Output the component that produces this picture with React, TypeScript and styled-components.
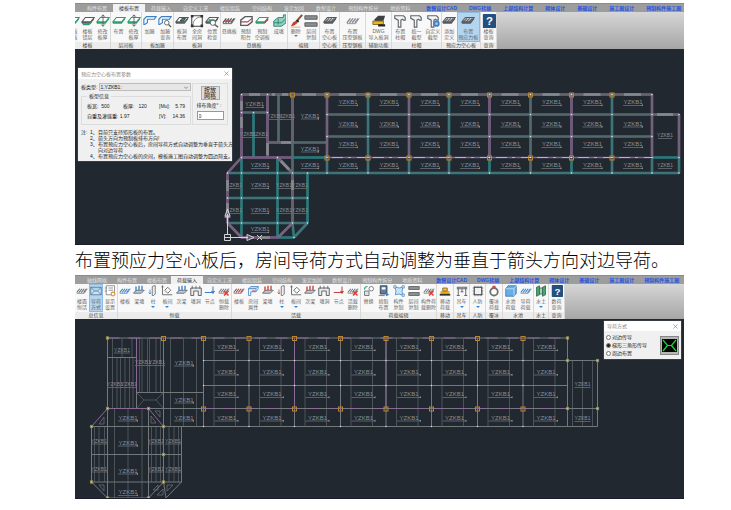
import React from "react";
import styled, { createGlobalStyle, css } from "styled-components";

const CJK = `"Noto Sans CJK SC", sans-serif`;

const GlobalStyle = createGlobalStyle`
  * { box-sizing: border-box; }
  body { margin: 0; background: #fff; font-family: "Liberation Sans", ${CJK}; }
  button, input, select { font: inherit; color: inherit; margin: 0; padding: 0; }
`;

const Page = styled.main`
  padding: 3px 47px 11px 75px;
`;
const Shot = styled.section`
  overflow: hidden;
  font: 5px/6px "Liberation Sans", ${CJK};
`;
const Caption = styled.p`
  margin: 0;
  height: 30px;
  font: 300 18px/33px "Liberation Serif", ${CJK};
  color: #000;
  white-space: nowrap;
`;

/* ---------- ribbon ---------- */
const TabBar = styled.nav<{ $gap: number; $start: number }>`
  display: flex;
  gap: ${(p) => p.$gap}px;
  height: 9px;
  padding-left: ${(p) => p.$start}px;
  background: #9d9d9d;
  border-top: 1px solid #8b8b8b;
  overflow: hidden;
`;
const LinkTabs = styled.div<{ $gap: number }>`
  display: flex;
  gap: ${(p) => p.$gap}px;
  padding-left: 4px;
`;
const Tab = styled.button<{ $active?: boolean; $link?: boolean }>`
  flex: none;
  border: 0;
  background: none;
  color: #e2e2e2;
  line-height: 8px;
  white-space: nowrap;
  ${(p) => p.$link && css`color: #1f55e0; font-weight: 700;`}
  ${(p) => p.$active && css`
    color: #333;
    background: #f1f1f1;
    padding: 0 6px;
    margin: 0 -6px;
  `}
`;
const Ribbon = styled.div`
  display: flex;
  overflow: hidden;
  background: linear-gradient(#d6d6d6, #a6a6a6);
`;
const Group = styled.div<{ $w: number; $clipped?: boolean }>`
  flex: 0 0 ${(p) => p.$w}px;
  margin-left: ${(p) => (p.$clipped ? -10 : 0)}px;
  display: flex;
  flex-direction: column;
  background: #f8f8f8;
  border-right: 1px solid #d8d8d8;
`;
const Buttons = styled.div`
  display: flex;
`;
const ToolButton = styled.button<{ $on?: boolean; $grow?: number; $tall?: boolean }>`
  flex: ${(p) => p.$grow ?? 1} 1 0;
  min-width: 0;
  display: flex;
  flex-direction: column;
  align-items: center;
  gap: ${(p) => (p.$tall ? 0 : 1)}px;
  height: ${(p) => (p.$tall ? 30 : 28)}px;
  padding-top: ${(p) => (p.$tall ? 2 : 1)}px;
  border: 0;
  background: ${(p) => (p.$on ? "#b4d5f0" : "none")};
  box-shadow: ${(p) => (p.$on ? "inset 0 0 0 1px #8dbbe2" : "none")};
  color: #666;
  white-space: pre;
  line-height: 6px;
  svg { flex: none; }
`;
const Arrow = styled.span`
  margin-top: 1px;
  border: 2px solid transparent;
  border-top-color: #2f86d8;
`;
const GroupName = styled.div`
  height: 7px;
  background: #ececec;
  color: #444;
  text-align: center;
  line-height: 7px;
  white-space: nowrap;
`;

const Hatch = ({ c }: { c: string }) => (
  <g stroke={c} strokeWidth="1.5" fill="none">
    <path d="M1 10 5 5M4 10 8 5M7 10 11 5M10 10 14 5" />
    <path d="M1 11H11L15 5" strokeWidth="1" />
  </g>
);
const Slab = ({ c, fill = "#fff" }: { c: string; fill?: string }) => (
  <g>
    <path d="M1 9 5 4H15L11 9Z" fill={fill} stroke={c} strokeWidth="1.2" />
    <path d="M1 9V11H11L15 6V4L11 9Z" fill={c} />
  </g>
);

const BLUE = "#3d80c4";
const RED = "#c2423a";
const GREEN = "#2f9e6e";
const GREY = "#555b60";

const shapes: Record<string, React.ReactNode> = {
  slabDrop: <><Slab c={GREY} /><path d="M2 12H9L12 9" stroke={GREEN} strokeWidth="1.5" fill="none" /></>,
  slabEdit: <><Slab c={GREEN} /><path d="M8 1V14M6 3 8 1 10 3M6 12 8 14 10 12" stroke={GREY} fill="none" /></>,
  slab: <Slab c={GREEN} />,
  haunch: <path d="M1 6 4 3H15L13 6H5V10L2 12H1Z" fill="#fff" stroke={BLUE} strokeWidth="1.3" />,
  haunchFind: <><path d="M1 6 4 3H15L13 6H5V10L2 12H1Z" fill="#fff" stroke={BLUE} strokeWidth="1.3" /><circle cx="10" cy="10" r="2.6" fill="#fff" stroke={GREY} /><path d="M12 12 15 15" stroke={GREY} strokeWidth="1.5" /></>,
  hole: <><Slab c={GREY} /><path d="M6 8 8 5H12L10 8Z" fill={GREEN} stroke="#333" /></>,
  frame: <><path d="M2 2H14V14H2Z" fill="#fff" stroke="#444" strokeWidth="1.2" /><path d="M3 13Q4 4 13 3" fill="none" stroke="#777" /><path d="M1 1H4V4H1ZM12 1H15V4H12ZM1 12H4V15H1ZM12 12H15V15H12Z" fill="#333" /></>,
  find: <><Slab c={GREY} /><path d="M4 6H11V9H4Z" fill={GREEN} /><circle cx="9" cy="10" r="3" fill="#fff" stroke={GREY} /><path d="M11 12 15 15" stroke={GREY} strokeWidth="1.6" /></>,
  canti: <><Hatch c={GREY} /><path d="M3 8H10" stroke={RED} strokeWidth="1.5" /></>,
  balcony: <><path d="M2 7 7 3H15V9L10 13H2Z" fill="#fff" stroke={GREY} strokeWidth="1.5" /><path d="M2 9H10L15 5" fill="none" stroke={RED} strokeWidth="1.4" /></>,
  acSlab: <><Slab c={GREEN} /><path d="M11 10 15 6" stroke={RED} strokeWidth="1.6" /></>,
  wallUp: <><path d="M2 8 7 4H13V1H16V10L11 14H2Z" fill="#8fd0bf" stroke="#28806c" /><path d="M7 5V12M2 10H11L15 6" stroke="#28806c" fill="none" /></>,
  brush: <><path d="M15 1 8 9" stroke="#8a542d" strokeWidth="2.4" /><path d="M8 8 10 10 6 13 2 14 5 9Z" fill={RED} /><path d="M9 7 11 9" stroke="#222" strokeWidth="2" /><path d="M2 15H13" stroke="#e0a060" /></>,
  layers: <path d="M1 2H15V6H1ZM1 10H15V14H1Z" fill="#8c8f92" stroke="#555" />,
  hollow: <><Slab c={GREY} fill="#d6dadd" /><path d="M3 9 7 5M6 9 10 5M9 9 13 5" stroke={GREY} strokeWidth="1.3" /></>,
  steel: <Hatch c="#848b91" />,
  dwg: <><path d="M3 6 7 2H15L13 8H3Z" fill="#3c4146" /><path d="M1 8H13V12H1Z" fill="#e8b525" stroke="#846514" /><path d="M7 13H15" stroke="#222" strokeWidth="2.5" /></>,
  cap: <path d="M2 2H12L14 4 14 7 12 7 11 6 9 7V15H6V7L2 5Z" fill="#f4f4f4" stroke="#60676c" strokeWidth="1.3" />,
  capGear: <><path d="M2 2H12L14 4 14 7 12 7 11 6 9 7V15H6V7L2 5Z" fill="#f4f4f4" stroke="#60676c" strokeWidth="1.3" /><circle cx="12" cy="11" r="2.6" fill="#9ec8ee" stroke={BLUE} strokeWidth="2" /></>,
  help: <><rect x="1" y="0" width="15" height="16" rx="1" fill="#24507f" /><text x="8.5" y="13" fontSize="13" fontWeight="700" textAnchor="middle" fill="#fff" fontFamily="Liberation Sans">?</text></>,
  hatchGrey: <Hatch c="#666d73" />,
  envelope: <path d="M1 3H15V13H1ZM1 3 6 8H10L15 3M1 13 6 8M10 8 15 13" fill="#cfe3f5" stroke="#4a6e92" />,
  gearList: <><path d="M3 1H14V13H3Z" fill="#fff" stroke="#777" /><path d="M6 4H12M6 7H12" stroke="#777" /><circle cx="12" cy="12" r="2.5" fill="#fff" stroke="#d39b33" strokeWidth="1.5" /><path d="M1 4H4M1 8H4" stroke="#777" /></>,
  hatchBlue: <Hatch c={BLUE} />,
  hatchRed: <Hatch c="#9c4a49" />,
  room: <><path d="M2 5 5 2H15L12 5Z" fill="#bcdcf5" stroke={BLUE} /><path d="M2 5H12V9H5V14H2Z" fill="#e9f3fb" stroke={BLUE} /><path d="M12 9 15 5V2" fill="none" stroke={BLUE} /><path d="M7 8H11" stroke={RED} strokeWidth="1.4" /></>,
  beamBlue: <><path d="M1 10 5 7H15L11 11H1Z" fill="#bfc7ce" stroke={GREY} /><path d="M4 2V8M8 1V7M12 1V7" stroke={BLUE} strokeWidth="1.8" /></>,
  beamRed: <><path d="M1 10 5 7H15L11 11H1Z" fill="#bfc7ce" stroke={GREY} /><path d="M4 2V8M8 1V7M12 1V7" stroke={RED} strokeWidth="1.8" /></>,
  colBlue: <><path d="M7 2 9 1H11V12L9 14H7Z" fill="#eee" stroke={GREY} /><path d="M4 6V12M2 10 4 12 5 10" fill="none" stroke={BLUE} /></>,
  colRed: <><path d="M7 2 9 1H11V12L9 14H7Z" fill="#eee" stroke={GREY} /><path d="M4 6V12M2 10 4 12 5 10" fill="none" stroke={RED} /></>,
  diamond: <path d="M2 1V13H15M1 3 2 1 3 3M9 3 13 7 9 11 5 7Z" fill="none" stroke="#666" strokeWidth="1.2" />,
  arch: <><path d="M1 4H15V14H11V8H5V14H1Z" fill="#e8eaec" stroke={GREY} strokeWidth="1.2" /><path d="M3 1V5M8 1V5M13 1V5" stroke={GREY} /></>,
  nodeBlue: <path d="M1 10H11M12 2V11M10 8 12 11 14 8" fill="none" stroke={BLUE} strokeWidth="1.4" />,
  nodeRed: <path d="M1 10H11M12 2V11M10 8 12 11 14 8" fill="none" stroke={RED} strokeWidth="1.4" />,
  erase: <><Hatch c="#747b82" /><path d="M8 8 14 14M14 8 8 14" stroke="#e23a32" strokeWidth="2" /></>,
  swap: <><path d="M2 8H8V14H2Z" fill="#d7e6dc" stroke={GREY} /><circle cx="11" cy="5" r="3" fill="#fff" stroke={GREY} /><path d="M2 6Q2 2 6 2" stroke={GREEN} strokeWidth="1.5" fill="none" /></>,
  pick: <><path d="M3 1H12V12H3Z" fill="#557ea8" stroke="#333" /><path d="M5 3H10V6H5Z" fill="#fff" /><path d="M9 9 15 13 11 15Z" fill={BLUE} /><path d="M1 14H9" stroke="#c17d38" strokeWidth="1.5" /></>,
  copy: <><path d="M2 2 8 4 13 3 12 9 14 14 8 12 3 13 4 8Z" fill="#c9e2f4" stroke={BLUE} /><path d="M1 1H4V4H1ZM12 1H15V4H12ZM12 12H15V15H12Z" fill="#fff" stroke={BLUE} /></>,
  truck: <><path d="M2 8H14V12H2Z" fill="#eba91b" /><path d="M5 4H11V8H5Z" fill="#f3c34a" stroke="#765514" /><path d="M1 13H15" stroke="#333" strokeWidth="2.4" /></>,
  crane: <path d="M1 3H15M3 3V14M13 3V14M1 5H15M8 5V9M6 9H10M1 14H5M11 14H15" fill="none" stroke="#60666b" strokeWidth="1.3" />,
  chip: <><path d="M4 1V15M8 1V15M12 1V15M1 4H15M1 8H15M1 12H15" stroke="#777" /><rect x="3" y="3" width="10" height="10" fill="#f1f1f1" stroke="#454b50" strokeWidth="1.5" /></>,
  ring: <><circle cx="8" cy="9" r="5" fill="#fff" stroke="#687078" strokeWidth="2.4" /><path d="M6 1H10V5H6Z" fill="#c45248" /></>,
  pool: <><path d="M1 5 4 1H15V11L12 15H1Z" fill="#65aee8" stroke="#326fa2" /><path d="M1 5H12V15M12 5 15 1" fill="none" stroke="#d2eafc" /></>,
  soil: <><path d="M2 3 6 1V13L2 15ZM10 3 14 1V13L10 15Z" fill="#4aa372" stroke="#276144" /><path d="M6 4H10V12H6Z" fill="#a8d5ba" stroke="#276144" /></>,
};

type Tool = { icon: string; text: string; on?: boolean; menu?: boolean; grow?: number };
type ToolGroup = { name: string; w: number; clipped?: boolean; tools: Tool[] };
const t = (icon: string, text: string, more: Partial<Tool> = {}): Tool => ({ icon, text, ...more });

const slabGroups: ToolGroup[] = [
  { name: "楼板", w: 46, clipped: true, tools: [t("slab", "楼板\n生板"), t("slabDrop", "楼板\n错层"), t("slabEdit", "修改\n板厚")] },
  { name: "层间板", w: 31, tools: [t("slab", "布置"), t("slabEdit", "修改\n板厚")] },
  { name: "板加腋", w: 32, tools: [t("haunch", "加腋"), t("haunchFind", "加腋\n查询")] },
  { name: "板洞", w: 47, tools: [t("hole", "板洞\n布置"), t("frame", "全房\n间洞"), t("find", "位置\n检查")] },
  { name: "悬挑板", w: 67, tools: [t("canti", "悬挑板"), t("balcony", "预制\n阳台"), t("acSlab", "预制\n空调板"), t("wallUp", "成墙")] },
  { name: "编辑", w: 32, tools: [t("brush", "删除", { menu: true }), t("layers", "层间\n复制")] },
  { name: "空心板", w: 20, tools: [t("hollow", "布置\n空心板")] },
  { name: "压型钢板", w: 26, tools: [t("steel", "布置\n压型钢板")] },
  { name: "辅助功能", w: 26, tools: [t("dwg", "DWG\n导入板洞")] },
  { name: "柱帽", w: 50, tools: [t("cap", "布置\n柱帽"), t("cap", "统一\n截型"), t("capGear", "自定义\n截型")] },
  { name: "预应力空心板", w: 39, tools: [t("hollow", "添加\n定义", { grow: 5 }), t("hollow", "布置\n预应力板", { on: true, grow: 8 })] },
  { name: "查询", w: 16, tools: [t("help", "楼板\n查询")] },
];

const loadGroups: ToolGroup[] = [
  { name: "总信息", w: 43, tools: [t("hatchGrey", "楼面\n恒活"), t("envelope", "导荷\n方式", { on: true }), t("gearList", "显示\n设置")] },
  { name: "恒载", w: 114, tools: [t("hatchBlue", "楼板"), t("beamBlue", "梁墙"), t("colBlue", "柱", { menu: true }), t("diamond", "板间", { menu: true }), t("beamBlue", "次梁"), t("arch", "墙洞"), t("nodeBlue", "节点"), t("erase", "恒载\n删除")] },
  { name: "活载", w: 129, tools: [t("hatchRed", "楼板"), t("room", "房间\n属性"), t("beamRed", "梁墙"), t("colRed", "柱", { menu: true }), t("diamond", "板间", { menu: true }), t("beamRed", "次梁"), t("arch", "墙洞"), t("nodeRed", "节点"), t("erase", "活载\n删除")] },
  { name: "荷载编辑", w: 76, tools: [t("swap", "替换"), t("pick", "拾取\n布置"), t("copy", "构件\n复制"), t("layers", "层间\n复制"), t("erase", "构件荷\n载删除")] },
  { name: "移动", w: 17, tools: [t("truck", "移动\n荷载", { menu: true })] },
  { name: "吊车", w: 16, tools: [t("crane", "吊车", { menu: true })] },
  { name: "人防", w: 16, tools: [t("chip", "人防", { menu: true })] },
  { name: "覆冰", w: 17, tools: [t("ring", "覆冰\n荷载")] },
  { name: "水池", w: 31, tools: [t("pool", "水池\n荷载"), t("hatchBlue", "导荷\n荷载")] },
  { name: "水土", w: 15, tools: [t("soil", "水土", { menu: true })] },
  { name: "查询", w: 16, tools: [t("help", "数荷\n查询")] },
];

const plainTabs = ["构件布置", "楼板布置", "荷载输入", "自定义工况", "楼层组装", "空间结构", "鉴定加固", "数智设计", "预制构件拆分", "地质资料"];
const linkTabs = ["数智设计CAD", "DWG转换", "上部结构计算", "砌体设计", "基础设计", "施工图设计", "预制构件施工图"];

function RibbonBar({ tabs, active, gap, start, groups, tall }: {
  tabs: string[]; active: string; gap: number; start: number; groups: ToolGroup[]; tall?: boolean;
}) {
  const size = tall ? 14 : 12;
  return (
    <header>
      <TabBar $gap={gap} $start={start}>
        {tabs.map((n) => <Tab key={n} $active={n === active}>{n}</Tab>)}
        <LinkTabs $gap={gap}>
          {linkTabs.map((n) => <Tab key={n} $link>{n}</Tab>)}
        </LinkTabs>
      </TabBar>
      <Ribbon>
        {groups.map((g) => (
          <Group key={g.name} $w={g.w} $clipped={g.clipped}>
            <Buttons>
              {g.tools.map((b, i) => (
                <ToolButton key={i} $on={b.on} $grow={b.grow} $tall={tall}>
                  <svg width={size} height={size} viewBox="0 0 16 16" aria-hidden="true">{shapes[b.icon]}</svg>
                  <span>{b.text}</span>
                  {b.menu && <Arrow />}
                </ToolButton>
              ))}
            </Buttons>
            <GroupName>{g.name}</GroupName>
          </Group>
        ))}
      </Ribbon>
    </header>
  );
}

/* ---------- drawings ---------- */
const Canvas = styled.div`
  position: relative;
  background: #212830;
  overflow: hidden;
  border-bottom: 1px solid #1c1c2e;
`;
const Drawing = styled.svg`
  display: block;
  width: 100%;
  height: auto;
  text { font: 6px "Liberation Sans", sans-serif; fill: #8b8e92; text-anchor: middle; }
  text.small { font-size: 5px; }
`;

type Seg = [number, number, number, number];
const toPath = (s: Seg[]) => s.map(([a, b, c, d]) => `M${a} ${b}L${c} ${d}`).join("");

const Mark = ({ x, y, half = 10 }: { x: number; y: number; half?: number }) => (
  <g>
    <text x={x} y={y - 1} className={half > 8 ? undefined : "small"}>YZKB1</text>
    <path d={`M${x - half} ${y + 0.5}H${x + half}`} stroke="#6b6f74" strokeWidth="0.8" />
    {half > 8 && <path d={`M${x + half} ${y - 0.7}v2l-2 -1z`} fill="#8d9094" />}
  </g>
);

const axes = [327, 368, 409, 449, 489.5, 530.5, 571.5, 612];

function WallPlan() {
  const teal: Seg[] = [
    [327, 114.5, 652, 114.5], [327, 136.5, 652, 136.5], [227.5, 173, 679, 173],
    [292, 142.5, 327, 142.5], [292, 157.5, 327, 157.5], [652, 157.5, 679, 157.5],
    [241.5, 112.5, 267.5, 112.5], [253.5, 112.5, 253.5, 157], [278.5, 94.5, 278.5, 142.5],
    [292.5, 142.5, 292.5, 173], [241.5, 157, 241.5, 237.5], [277.5, 157, 277.5, 237.5],
    [227.5, 198, 308, 198], [227.5, 223, 308, 223], [307.5, 173, 307.5, 223],
    [307.5, 223, 294, 237.5], [292.5, 223, 294, 237.5], [278, 237.5, 294, 237.5],
    [679, 157, 679, 173], [652, 157, 652, 173],
    ...axes.map((x): Seg => [x, 157, x, 173]),
    ...axes.filter((_, i) => i % 2).map((x): Seg => [x, 94, x, 157]),
  ];
  const purple: Seg[] = [
    [241.5, 94.5, 652, 94.5], [241.5, 94.5, 241.5, 157.5], [267.5, 94.5, 267.5, 157.5],
    [292.5, 94.5, 292.5, 142.5], [267.5, 142.5, 292, 142.5], [241.5, 157.5, 292, 157.5],
    [241.5, 157.5, 227.5, 173], [277.5, 157.5, 292.5, 173], [227.5, 173, 227.5, 223],
    [292.5, 173, 292.5, 223], [227.5, 223, 241.5, 237.5], [241.5, 237.5, 278, 237.5],
    [278, 237.5, 292.5, 223], [652, 94.5, 652, 157], [652, 114.5, 679, 114.5], [679, 114.5, 679, 157],
    ...axes.filter((_, i) => i % 2 === 0).map((x): Seg => [x, 94, x, 157]),
  ];
  const glass: Seg[] = [
    [249, 94.5, 260, 94.5], [272, 94.5, 275, 94.5], [282, 94.5, 288, 94.5], [302, 94.5, 316, 94.5],
    [241.5, 101, 241.5, 110], [241.5, 117, 241.5, 128], [267.5, 143, 267.5, 155], [281, 142.5, 291, 142.5],
    [227.5, 180, 227.5, 191], [227.5, 203, 227.5, 214], [281, 161, 289, 169.5], [260, 237.5, 270, 237.5],
    [292.5, 180, 292.5, 190], [657, 114.5, 673, 114.5],
    ...axes.map((x): Seg => [x + 12, 94.5, x + 29, 94.5]),
  ];
  const nodes = [...axes, 652].flatMap((x) => [94.5, 114.5, 136.5, 157.5, 173].map((y) => [x, y]))
    .concat([[241.5, 94.5], [241.5, 112.5], [267.5, 94.5], [267.5, 112.5], [253.5, 112.5], [241.5, 157.5], [277.5, 157.5], [292.5, 173], [227.5, 173], [227.5, 198], [227.5, 223], [241.5, 173], [241.5, 198], [241.5, 223], [277.5, 173], [277.5, 198], [277.5, 223], [292.5, 198], [292.5, 223], [307.5, 198], [307.5, 223], [307.5, 173], [241.5, 237.5], [294, 237.5], [679, 114.5], [679, 157.5], [679, 173]]);
  return (
    <Drawing viewBox="75 49 609 195">
      <path d={toPath(teal)} stroke="#2d7f82" strokeWidth="2.6" />
      <path d={toPath(teal)} stroke="#52686d" strokeWidth="1" />
      <path d={toPath(purple)} stroke="#80668a" strokeWidth="2.6" />
      <path d={toPath(purple)} stroke="#65616b" strokeWidth="1" />
      <path d={toPath(glass)} stroke="#868a8e" strokeWidth="2.6" />
      <path d="M327 157.5H652" stroke="#212830" strokeWidth="3" />
      <path d="M327 157.5H652" stroke="#80668a" strokeWidth="1.4" />
      <path d="M332 157.5H652" stroke="#b4b7ba" strokeWidth="1.2" strokeDasharray="11 5 3 6 9 7" />
      {[292.5, ...axes].map((x) => <rect key={x} x={x - 2} y={93} width="4" height="4" fill="none" stroke="#b9862f" />)}
      {axes.map((x) => <rect key={x} x={x - 2} y={156} width="4" height="4" fill="none" stroke="#b9862f" />)}
      {nodes.map(([x, y], i) => <rect key={i} x={x - 0.7} y={y - 0.7} width="1.4" height="1.4" fill="#dfe8ea" />)}
      {axes.map((x) => [105, 126.5, 147, 168].map((y) => <Mark key={`${x}-${y}`} x={x + 21} y={y} />))}
      {[[254.5, 107], [310, 118.5], [310, 151.5], [310, 168], [260, 168], [260, 188], [260, 213], [260, 232]].map(([x, y]) => <Mark key={`${x}-${y}`} x={x} y={y} half={9} />)}
      {[[248, 137], [260, 137], [275, 119], [287, 119], [234, 188], [234, 213], [284, 188], [300, 188], [284, 213], [300, 213], [665, 138], [665, 168]].map(([x, y]) => <Mark key={`${x}-${y}`} x={x} y={y} half={7} />)}
      <path d="M224.5 234.5h6v6h-6zM227.5 234.5V214M224.5 237.5H248M224.5 217h6M225 216l2.5 -7 2.5 7zM247 234.5l7 3 -7 3zM257 235l5 5m0 -5l-5 5" fill="none" stroke="#d2d5d8" strokeWidth="1" />
    </Drawing>
  );
}

const bays = [203.5, 249, 294.5, 340.5, 386, 431.5, 477.5, 523];

function LoadPlan() {
  const main: Seg[] = [
    [107.5, 338, 567.5, 338], [203.5, 360.5, 567.5, 360.5], [203.5, 385.5, 567.5, 385.5],
    [107.5, 408.5, 597.5, 408.5], [91.5, 426.5, 597.5, 426.5], [567.5, 360.5, 597.5, 360.5],
    ...bays.map((x): Seg => [x, 338, x, 426.5]), [567.5, 338, 567.5, 426.5], [597.5, 360.5, 597.5, 426.5],
    [107.5, 338, 107.5, 498], [107.5, 357.5, 136.5, 357.5], [136.5, 392.5, 203.5, 392.5], [136.5, 338, 136.5, 408.5],
    [163.5, 338, 163.5, 482], [148.5, 408.5, 148.5, 498], [91.5, 454.5, 181.5, 454.5], [91.5, 482, 181.5, 482],
    [181.5, 426.5, 181.5, 482], [181.5, 482, 166, 498], [166, 498, 163.5, 482],
  ];
  const faint: Seg[] = [
    ...bays.flatMap((x): Seg[] => [[x + 10.5, 338, x + 10.5, 426.5], [x + 32, 338, x + 32, 426.5]]),
    [572.5, 360.5, 572.5, 426.5], [582.5, 360.5, 582.5, 426.5], [592.5, 360.5, 592.5, 426.5],
    [112.5, 338, 112.5, 357.5], [122, 338, 122, 357.5], [132, 338, 132, 357.5],
    [112.5, 357.5, 112.5, 408.5], [117, 357.5, 117, 408.5], [120.5, 357.5, 120.5, 408.5], [125, 357.5, 125, 408.5], [129.5, 357.5, 129.5, 408.5], [133, 357.5, 133, 408.5],
    [139.5, 338, 139.5, 392.5], [142, 338, 142, 392.5], [147.5, 338, 147.5, 392.5], [149.5, 338, 149.5, 392.5], [156, 338, 156, 392.5], [160.5, 338, 160.5, 392.5],
    [170.5, 338, 170.5, 426.5], [183.5, 338, 183.5, 426.5], [196.5, 338, 196.5, 426.5],
    [114.5, 408.5, 114.5, 498], [128, 408.5, 128, 498], [142, 408.5, 142, 498],
    [94.5, 426.5, 94.5, 482], [99, 426.5, 99, 482], [104.5, 426.5, 104.5, 482],
    [151.5, 426.5, 151.5, 482], [156, 426.5, 156, 482], [160.5, 426.5, 160.5, 482],
    [169, 426.5, 169, 482], [174, 426.5, 174, 482], [178.5, 426.5, 178.5, 482],
    [136.5, 392.5, 144, 400], [136.5, 408.5, 144, 400], [144, 400, 156, 400], [156, 400, 163.5, 392.5], [156, 400, 163.5, 408.5],
  ];
  const purple: Seg[] = [
    [107.5, 338, 107.5, 408.5], [136.5, 338, 136.5, 392.5], [163.5, 338, 163.5, 392.5],
    [107.5, 408.5, 91.5, 426.5], [91.5, 426.5, 91.5, 482], [91.5, 482, 107.5, 498], [148.5, 408.5, 163.5, 426.5],
    [163.5, 426.5, 163.5, 482], [163.5, 482, 148.5, 498], [567.5, 338, 567.5, 408.5], [597.5, 360.5, 597.5, 408.5],
    [107.5, 408.5, 148.5, 408.5], [107.5, 498, 148.5, 498],
    ...bays.filter((_, i) => i % 2 === 0).map((x): Seg => [x, 338, x, 408.5]),
  ];
  const joints = [[107.5, 338], [107.5, 408.5], [148.5, 408.5], [91.5, 426.5], [163.5, 426.5], [163.5, 454.5], [91.5, 482], [163.5, 482], [107.5, 498], [148.5, 498], [567.5, 338], [567.5, 360.5], [597.5, 360.5], [567.5, 408.5], [597.5, 408.5]];
  return (
    <Drawing viewBox="75 319 609 179">
      <path d={toPath(faint)} stroke="#4c5358" strokeWidth="1" />
      <path d={toPath(main)} stroke="#73787b" strokeWidth="1" />
      <path d={toPath(purple)} stroke="#8b6a97" strokeWidth="1" />
      <path d="M107.5 338H567M203 408.5H567" stroke="#8b6a97" strokeWidth="1" strokeDasharray="12 9" />
      <path d="M104 417v7h-5zM160 411v6l-5 -6zM151 416v7h5zM99 485h5v6zM158 485v5l-5 0zM163 489v6h-6zM167 485h6l-6 6z" fill="none" stroke="#686e72" strokeWidth="0.8" />
      {bays.map((x) => [360.5, 385.5, 426.5].map((y) => <rect key={`${x}-${y}`} x={x - 0.6} y={y - 0.6} width="1.2" height="1.2" fill="#e6e6e6" />))}
      {[163.5, ...bays].map((x) => <rect key={x} x={x - 2} y={336.5} width="4" height="4" fill="none" stroke="#b9862f" />)}
      {bays.map((x) => <rect key={x} x={x - 2} y={407} width="4" height="4" fill="none" stroke="#b9862f" />)}
      {joints.map(([x, y]) => <rect key={`${x}-${y}`} x={x - 1.2} y={y - 1.2} width="2.4" height="2.4" fill="#c9c9a8" stroke="#8e8b48" strokeWidth="0.8" />)}
      {bays.map((x) => [350, 374.5, 397, 420.5].map((y) => <Mark key={`${x}-${y}`} x={x + 23} y={y} half={12} />))}
      {[[184, 365.5], [184, 402.5], [184, 420.5], [128, 420.5], [128, 445.5], [128, 473.5], [128, 495]].map(([x, y]) => <Mark key={`${x}-${y}`} x={x} y={y} half={10} />)}
      {[[122, 352.5], [115, 387], [129, 387], [143, 365], [157, 365], [99, 443.5], [99, 471.5], [156, 443.5], [173, 443.5], [156, 471.5], [173, 471.5], [582.5, 387], [582.5, 421]].map(([x, y]) => <Mark key={`${x}-${y}`} x={x} y={y} half={8} />)}
    </Drawing>
  );
}

/* ---------- dialogs ---------- */
const Dialog = styled.form<{ $side: "left" | "right" }>`
  position: absolute;
  ${(p) => (p.$side === "left" ? "left: 3px; top: 19px; width: 154px;" : "right: 3px; top: 2px; width: 77px;")}
  background: #f0f0f0;
  color: #222;
  box-shadow: 0 0 1px #aaa;
`;
const TitleBar = styled.div<{ $h: number }>`
  display: flex;
  justify-content: space-between;
  align-items: center;
  height: ${(p) => p.$h}px;
  padding: 0 3px;
  background: #fff;
  color: #888;
`;
const Close = styled.button`
  border: 0;
  background: none;
  line-height: 0;
`;
const Params = styled.div`
  display: flex;
  gap: 1px;
  padding: 4px 4px 0 3px;
`;
const Left = styled.div`
  flex: 1;
  min-width: 0;
`;
const TypeRow = styled.label`
  display: flex;
  align-items: center;
  gap: 2px;
  white-space: nowrap;
`;
const TypeBox = styled.span`
  flex: 1;
  display: flex;
  align-items: center;
  height: 8px;
  padding-right: 2px;
  border: 1px solid #bcbcbc;
  background: #e6e6e6;
`;
const TypeSelect = styled.select`
  flex: 1;
  appearance: none;
  border: 0;
  background: none;
  height: 6px;
  line-height: 6px;
`;
const Info = styled.fieldset`
  margin: 2px 0 0;
  padding: 4px 5px 1px;
  border: 1px solid #dcdcdc;
  legend { padding: 0 2px; }
`;
const Values = styled.div`
  display: grid;
  grid-template-columns: 36px 36px 1fr auto;
  height: 10px;
  line-height: 6px;
  white-space: pre;
  span:last-child { text-align: right; }
`;
const Side = styled.div`
  flex: 0 0 36px;
  display: flex;
  flex-direction: column;
  align-items: center;
  padding-top: 2px;
  border: 1px solid #dedede;
`;
const GridButton = styled.button`
  width: 19px;
  height: 14px;
  border: 1px solid #aaa;
  background: #ddd;
  font-size: 6px;
  line-height: 6px;
`;
const Angle = styled.label`
  display: flex;
  flex-direction: column;
  gap: 3px;
  padding-top: 2px;
  white-space: nowrap;
  input { width: 27px; height: 9px; border: 1px solid #999; background: #fff; padding-left: 1px; }
`;
const Notes = styled.div`
  padding: 4px 0 2px 3px;
  line-height: 6px;
  white-space: nowrap;
  display: grid;
  grid-template-columns: 9px 8px 1fr;
`;
const Modes = styled.div`
  display: flex;
  justify-content: space-between;
  align-items: center;
  padding: 3px 2px;
`;
const ModeList = styled.div`
  display: grid;
  gap: 2px;
`;
const Mode = styled.label`
  display: flex;
  align-items: center;
  gap: 1px;
  white-space: nowrap;
  input {
    appearance: none;
    width: 5px;
    height: 5px;
    border: 1px solid #777;
    border-radius: 50%;
    background: #fff;
  }
  input:checked { background: #222; }
`;
const Preview = styled.button`
  width: 19px;
  height: 19px;
  border: 1px solid #888;
  background: #b7b7b7;
  line-height: 0;
`;

const CloseIcon = () => (
  <svg width="5" height="5" viewBox="0 0 5 5"><path d="M0.5 0.5 4.5 4.5M4.5 0.5 0.5 4.5" stroke="#888" strokeWidth="0.7" /></svg>
);

const notes: [string, string, string][] = [
  ["注:", "1、", "目前只支持矩形板的布置。"],
  ["", "2、", "箭头方向为预制板排布方向!"],
  ["", "3、", "布置预应力空心板后，房间导荷方式自动调整为垂直于箭头方"],
  ["", "", "向对边导荷"],
  ["", "4、", "布置预应力空心板的房间，模板施工图自动调整为四边简支。"],
];

function SlabDialog() {
  return (
    <Dialog $side="left">
      <TitleBar $h={11}>预应力空心板布置参数<Close type="button" aria-label="关闭"><CloseIcon /></Close></TitleBar>
      <Params>
        <Left>
          <TypeRow>板类型:
            <TypeBox>
              <TypeSelect><option>1.YZKB1:</option></TypeSelect>
              <svg width="4" height="3" viewBox="0 0 4 3"><path d="M0 0.5 2 2.5 4 0.5" fill="none" stroke="#666" strokeWidth="0.7" /></svg>
            </TypeBox>
          </TypeRow>
          <Info>
            <legend>板型信息</legend>
            <Values><span>板宽:  500</span><span>板厚:   120</span><span>[Mu]:</span><span>5.79</span></Values>
            <Values><span>自重及灌缝重: 1.97</span><span /><span>[V]:</span><span>14.36</span></Values>
          </Info>
        </Left>
        <Side>
          <GridButton type="button">按放网格</GridButton>
          <Angle>排布角度° :<input defaultValue="0" /></Angle>
        </Side>
      </Params>
      <Notes>
        {notes.flatMap((row, i) => row.map((cell, j) => <span key={`${i}-${j}`}>{cell}</span>))}
      </Notes>
    </Dialog>
  );
}

function ModeDialog() {
  return (
    <Dialog $side="right">
      <TitleBar $h={10}>导荷方式<Close type="button" aria-label="关闭"><CloseIcon /></Close></TitleBar>
      <Modes>
        <ModeList>
          {["对边传导", "梯形三角形传导", "周边布置"].map((m, i) => (
            <Mode key={m}><input type="radio" name="mode" defaultChecked={i === 1} />{m}</Mode>
          ))}
        </ModeList>
        <Preview type="button" aria-label="梯形三角形传导">
          <svg width="15" height="13" viewBox="0 0 15 13">
            <rect width="15" height="13" fill="#050505" />
            <path d="M1 1 5.5 6.5H9.5L14 1M1 12 5.5 6.5M9.5 6.5 14 12" fill="none" stroke="#18d83a" strokeWidth="1.2" />
          </svg>
        </Preview>
      </Modes>
    </Dialog>
  );
}

export default function App() {
  return (
    <Page>
      <GlobalStyle />
      <Shot>
        <RibbonBar tabs={plainTabs} active="楼板布置" gap={12} start={12} groups={slabGroups} tall />
        <Canvas><WallPlan /><SlabDialog /></Canvas>
      </Shot>
      <Caption>布置预应力空心板后，房间导荷方式自动调整为垂直于箭头方向对边导荷。</Caption>
      <Shot>
        <RibbonBar tabs={["轴线网格", ...plainTabs]} active="荷载输入" gap={10} start={12} groups={loadGroups} />
        <Canvas><LoadPlan /><ModeDialog /></Canvas>
      </Shot>
    </Page>
  );
}
